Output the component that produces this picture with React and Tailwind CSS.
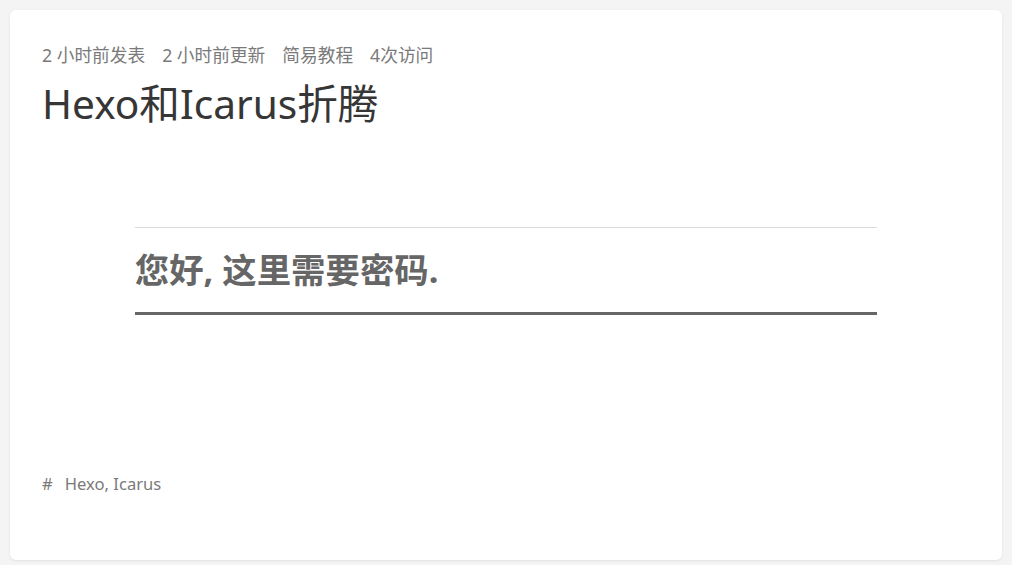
export default function App() {
  const font = { fontFamily: '"Noto Sans", "Noto Sans CJK SC", sans-serif' };
  return (
    <div className="min-h-[565px] w-full bg-[#f4f4f4] p-[10px]" style={font}>
      <div className="flex h-[550px] flex-col rounded-[6px] bg-white px-[32px] pt-[33px] shadow-[0_1px_3px_rgba(0,0,0,0.08)]">
        <div className="flex gap-[17px] text-[17.7px] leading-[24px] text-[#7a7a7a]">
          <span>2 小时前发表</span>
          <span>2 小时前更新</span>
          <span>简易教程</span>
          <span>4次访问</span>
        </div>
        <h1 className="mt-[11px] text-[40.6px] font-normal leading-[52px] text-[#363636]">Hexo和Icarus折腾</h1>
        <div className="mx-auto mt-[97px] w-[80%]">
          <div className="h-px bg-[#dbdbdb]" />
          <div className="pt-[22px] pb-[22px] text-[34.4px] font-bold leading-[40px] text-[#666]">您好, 这里需要密码.</div>
          <div className="h-[3px] bg-[#666]" />
        </div>
        <div className="mt-[157px] flex gap-[12px] text-[16.6px] leading-[24px] text-[#7a7a7a]">
          <span>#</span>
          <span>Hexo, Icarus</span>
        </div>
      </div>
    </div>
  );
}
